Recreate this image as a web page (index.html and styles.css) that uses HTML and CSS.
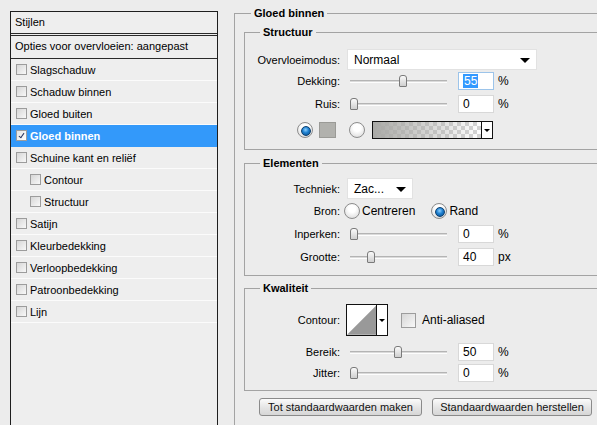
FILE: index.html
```html
<!DOCTYPE html>
<html lang="nl">
<head>
  <meta charset="UTF-8" />
  <title>Laagstijl — Gloed binnen</title>
  <link rel="stylesheet" href="styles.css">
</head>
<body>

<div class="dialog">

  <!-- Lijst met effecten -->
  <aside class="fx-panel">
    <div class="fx-head">Stijlen</div>
    <div class="fx-blend">Opties voor overvloeien: aangepast</div>
    <ul class="fx-list">
      <li><span class="cb"></span>Slagschaduw</li>
      <li><span class="cb"></span>Schaduw binnen</li>
      <li><span class="cb"></span>Gloed buiten</li>
      <li class="active"><span class="cb checked"></span>Gloed binnen</li>
      <li><span class="cb"></span>Schuine kant en reliëf</li>
      <li class="sub"><span class="cb"></span>Contour</li>
      <li class="sub"><span class="cb"></span>Structuur</li>
      <li><span class="cb"></span>Satijn</li>
      <li><span class="cb"></span>Kleurbedekking</li>
      <li><span class="cb"></span>Verloopbedekking</li>
      <li><span class="cb"></span>Patroonbedekking</li>
      <li><span class="cb"></span>Lijn</li>
    </ul>
  </aside>

  <!-- Instellingen -->
  <main class="settings">
    <fieldset class="group outer">
      <legend>Gloed binnen</legend>

      <fieldset class="group box-structure">
        <legend>Structuur</legend>
        <div class="row row-select">
          <label>Overvloeimodus:</label>
          <div class="select select-wide">Normaal<span class="arrow"></span></div>
        </div>
        <div class="row gap-2">
          <label>Dekking:</label>
          <div class="slider"><span class="thumb" style="left:49px"></span></div>
          <div class="num focus"><span class="sel">55</span></div>
          <span class="unit">%</span>
        </div>
        <div class="row gap-5">
          <label>Ruis:</label>
          <div class="slider"><span class="thumb" style="left:0px"></span></div>
          <div class="num">0</div>
          <span class="unit">%</span>
        </div>
        <div class="row row-color">
          <span class="radio on"></span>
          <span class="swatch"></span>
          <span class="radio"></span>
          <div class="gradient"><span class="grad-fill"></span><span class="mini-arrow"></span></div>
        </div>
      </fieldset>

      <fieldset class="group box-elements">
        <legend>Elementen</legend>
        <div class="row row-select">
          <label>Techniek:</label>
          <div class="select select-small">Zac...<span class="arrow"></span></div>
        </div>
        <div class="row gap-3">
          <label>Bron:</label>
          <span class="radio radio-first"></span><span class="opt">Centreren</span>
          <span class="radio radio-second on"></span><span class="opt">Rand</span>
        </div>
        <div class="row gap-5">
          <label>Inperken:</label>
          <div class="slider"><span class="thumb" style="left:0px"></span></div>
          <div class="num">0</div>
          <span class="unit">%</span>
        </div>
        <div class="row gap-5">
          <label>Grootte:</label>
          <div class="slider"><span class="thumb" style="left:17px"></span></div>
          <div class="num">40</div>
          <span class="unit">px</span>
        </div>
      </fieldset>

      <fieldset class="group box-quality">
        <legend>Kwaliteit</legend>
        <div class="row row-contour">
          <label>Contour:</label>
          <div class="contour">
            <svg class="contour-curve" width="30" height="30" viewBox="0 0 30 30">
              <polygon points="0,30 30,0 30,30" fill="#999999"/>
            </svg>
            <span class="mini-arrow"></span>
          </div>
          <span class="cb cb-large"></span><span class="opt">Anti-aliased</span>
        </div>
        <div class="row gap-7">
          <label>Bereik:</label>
          <div class="slider"><span class="thumb" style="left:44px"></span></div>
          <div class="num">50</div>
          <span class="unit">%</span>
        </div>
        <div class="row gap-3">
          <label>Jitter:</label>
          <div class="slider"><span class="thumb" style="left:0px"></span></div>
          <div class="num">0</div>
          <span class="unit">%</span>
        </div>
      </fieldset>

      <div class="buttons">
        <button class="btn btn-make">Tot standaardwaarden maken</button>
        <button class="btn btn-reset">Standaardwaarden herstellen</button>
      </div>
    </fieldset>
  </main>

</div>

</body>
</html>
```

FILE: styles.css
```css
* { box-sizing: border-box; margin: 0; padding: 0; }

body {
  background: #ececec;
  font-family: "Liberation Sans", Arial, sans-serif;
  font-size: 11px;
  color: #000;
  width: 597px;
  height: 425px;
  overflow: hidden;
}

.dialog {
  display: flex;
  align-items: flex-start;
  gap: 16px;
  padding-left: 10px;
}

/* ---- linker kolom ---- */
.fx-panel {
  flex-shrink: 0;
  width: 208px;
  height: 430px;
  margin-top: 11px;
  border: 1px solid #1e1e1e;
  background: #eeeeee;
}

.fx-head {
  height: 24px;
  line-height: 20px;
  padding-left: 4px;
  border-bottom: 3px double #2a2a2a;
}

.fx-blend {
  height: 23px;
  line-height: 21px;
  padding-left: 4px;
  border-bottom: 1px solid #2a2a2a;
}

.fx-list { list-style: none; }

.fx-list li {
  display: flex;
  align-items: center;
  height: 22px;
  padding-left: 5px;
  border-bottom: 1px solid #fbfbfb;
}

.fx-list li.sub { padding-left: 19px; }

.fx-list li.active {
  background: #3399fa;
  color: #fff;
  font-weight: bold;
  border-bottom-color: #3399fa;
}

.cb {
  display: inline-block;
  width: 11px;
  height: 11px;
  margin-right: 3px;
  border: 1px solid #9c9c9c;
  background: linear-gradient(135deg, #d6d6d6, #f8f8f8);
  position: relative;
}

.cb.checked { background: linear-gradient(135deg, #e4e4e4, #ffffff); }

.cb.checked::after {
  content: "";
  position: absolute;
  left: 3px;
  top: 1px;
  width: 2px;
  height: 5px;
  border: solid #2a3560;
  border-width: 0 1.5px 1.5px 0;
  transform: rotate(35deg);
}

.cb-large {
  width: 15px;
  height: 15px;
  margin-left: 13px;
  margin-right: 4px;
}

/* ---- rechter kolom ---- */
.settings {
  flex-shrink: 0;
  width: 400px;
  margin-top: 6px;
}

.group {
  border: 1px solid #a3a3a3;
  padding: 0;
}

.group legend {
  font-weight: bold;
  line-height: 14px;
  padding: 0 3px;
  margin-left: 15px;
}

.outer {
  height: 440px;
  padding: 5px 0 0 9px;
  border-right: none;
}

.outer > legend { margin-left: 7px; }

.box-structure { padding-bottom: 10px; }
.box-elements { margin-top: 6px; padding-bottom: 9px; }
.box-quality { margin-top: 5px; padding-bottom: 8px; }

.row {
  display: flex;
  align-items: center;
  height: 18px;
}

.row label {
  width: 95px;
  text-align: right;
  flex-shrink: 0;
}

.gap-2 { margin-top: 2px; }
.gap-3 { margin-top: 3px; }
.gap-5 { margin-top: 5px; }
.gap-7 { margin-top: 7px; }

.row-select { height: 21px; }
.box-structure .row-select { margin-top: 10px; }
.box-elements .row-select { margin-top: 8px; }

.select {
  position: relative;
  height: 21px;
  margin-left: 7px;
  padding-left: 6px;
  line-height: 20px;
  font-size: 12px;
  background: #fff;
  border: 1px solid #e2e2e2;
}

.select-wide { width: 190px; }
.select-small { width: 66px; }

.select .arrow {
  position: absolute;
  right: 6px;
  top: 8px;
  border-left: 5px solid transparent;
  border-right: 5px solid transparent;
  border-top: 5px solid #000;
}

.slider {
  position: relative;
  width: 97px;
  height: 3px;
  margin-left: 10px;
  background: #dadada;
  border-top: 1px solid #b4b4b4;
  border-bottom: 1px solid #fdfdfd;
}

.thumb {
  position: absolute;
  top: -6px;
  width: 8px;
  height: 12px;
  border: 1px solid #7a7a7a;
  border-radius: 3px 3px 1px 1px;
  background: linear-gradient(#fafafa, #cfcfcf);
}

.num {
  width: 36px;
  height: 18px;
  margin-left: 11px;
  padding-left: 4px;
  line-height: 16px;
  font-size: 12px;
  background: #fff;
  border: 1px solid #d8d8d8;
}

.num.focus { border-color: #9cc4ea; }

.sel {
  background: #3399ff;
  color: #fff;
  padding: 0 1px;
}

.unit {
  margin-left: 4px;
  font-size: 12px;
}

/* kleur of verloop */
.row-color { margin-top: 8px; }

.radio {
  display: inline-block;
  width: 16px;
  height: 16px;
  border-radius: 50%;
  border: 1px solid #8c8c8c;
  background: radial-gradient(circle at 50% 35%, #ffffff 30%, #d4d4d4 100%);
  position: relative;
  flex-shrink: 0;
}

.radio.on::after {
  content: "";
  position: absolute;
  left: 3px;
  top: 3px;
  width: 8px;
  height: 8px;
  border-radius: 50%;
  border: 1px solid #0d3f6e;
  background: radial-gradient(circle at 45% 35%, #8fd0ff 0, #1c7fcf 45%, #0b4a88 100%);
}

.row-color .radio:first-child { margin-left: 52px; }

.swatch {
  width: 17px;
  height: 16px;
  margin-left: 6px;
  margin-right: 13px;
  background: #b1b1ad;
  border: 1px solid #9a9a96;
}

.gradient {
  position: relative;
  display: flex;
  width: 121px;
  height: 18px;
  margin-left: 7px;
  border: 1px solid #111;
  background-color: #fff;
  background-image:
    linear-gradient(45deg, #d4d4d4 25%, transparent 25%, transparent 75%, #d4d4d4 75%),
    linear-gradient(45deg, #d4d4d4 25%, transparent 25%, transparent 75%, #d4d4d4 75%);
  background-size: 8px 8px;
  background-position: 0 0, 4px 4px;
}

.grad-fill {
  flex: 1;
  background: linear-gradient(to right, #a9a9a6, rgba(169, 169, 166, 0));
}

.mini-arrow {
  position: relative;
  width: 11px;
  background: #fff;
  border-left: 1px solid #111;
}

.mini-arrow::after {
  content: "";
  position: absolute;
  left: 2px;
  top: 50%;
  margin-top: -1px;
  border-left: 3px solid transparent;
  border-right: 3px solid transparent;
  border-top: 3px solid #000;
}

/* bron */
.radio-first { margin-left: 4px; }
.radio-second { margin-left: 16px; }
.opt { margin-left: 2px; font-size: 12px; }

/* kwaliteit */
.row-contour {
  height: 32px;
  margin-top: 9px;
}

.contour {
  display: flex;
  width: 42px;
  height: 32px;
  margin-left: 6px;
  border: 1px solid #111;
  background: #fff;
}

.contour-curve { display: block; }

.buttons {
  display: flex;
  gap: 10px;
  margin-top: 7px;
  padding-left: 15px;
}

.btn {
  height: 18px;
  font-family: "Liberation Sans", Arial, sans-serif;
  font-size: 11px;
  color: #111;
  border: 1px solid #8a8a8a;
  border-radius: 3px;
  background: linear-gradient(#fbfbfb, #e4e4e4 55%, #d6d6d6);
}

.btn-make { width: 163px; }
.btn-reset { width: 160px; }
```
